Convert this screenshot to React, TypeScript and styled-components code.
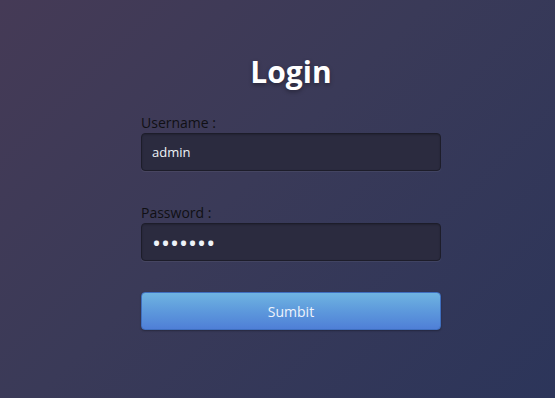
import React from "react";
import styled, { createGlobalStyle } from "styled-components";

const GlobalStyle = createGlobalStyle`
    html, body {
        margin: 0;
        padding: 0;
        height: 100%;
    }

    body {
        font-family: "Open Sans", "Liberation Sans", sans-serif;
        background: linear-gradient(135deg, #453a56 0%, #3a3a58 45%, #2c355a 100%);
        background-attachment: fixed;
    }

    #root {
        min-height: 100%;
    }
`;

const PageDiv = styled.div`
    width: 555px;
    height: 398px;
    box-sizing: border-box;
    padding: 51px 0 0 141px;
`;

const FormDiv = styled.form`
    width: 300px;
    display: flex;
    flex-direction: column;
`;

const Title = styled.h1`
    margin: 0 0 21px;
    text-align: center;
    font-size: 30px;
    line-height: 42px;
    font-weight: 700;
    color: #fff;
    text-shadow: 0 2px 4px rgba(0, 0, 0, 0.35);
`;

const Field = styled.div<{ $gap: number }>`
    display: flex;
    flex-direction: column;
    margin-bottom: ${(p) => p.$gap}px;
`;

const Label = styled.label`
    font-size: 14px;
    line-height: 18px;
    color: #101014;
    margin-bottom: 1px;
`;

const Input = styled.input<{ $dots?: boolean }>`
    box-sizing: border-box;
    width: 300px;
    height: 38px;
    padding: 0 10px;
    border: 1px solid #1d1d2a;
    border-radius: 4px;
    background: #2b2b3f;
    box-shadow: inset 0 1px 2px rgba(0, 0, 0, 0.2), 0 1px 0 rgba(255, 255, 255, 0.06);
    color: #eef3f8;
    font-family: "Open Sans", "Liberation Sans", sans-serif;
    font-size: ${(p) => (p.$dots ? "24px" : "13px")};
    letter-spacing: 0;
    outline: none;
`;

const SubmitButton = styled.button`
    box-sizing: border-box;
    width: 300px;
    height: 38px;
    border: 1px solid #3f6fbf;
    border-radius: 4px;
    background: linear-gradient(to bottom, #6fb4e1 0%, #5d99dc 50%, #4f7fd7 100%);
    color: #eef3fb;
    font-family: "Open Sans", "Liberation Sans", sans-serif;
    font-size: 14px;
    cursor: pointer;
    box-shadow: 0 1px 2px rgba(0, 0, 0, 0.3);
`;

export default function App(): JSX.Element {
    return (
        <>
            <GlobalStyle />
            <PageDiv>
                <FormDiv onSubmit={(e) => e.preventDefault()}>
                    <Title>Login</Title>
                    <Field $gap={33}>
                        <Label htmlFor="username">Username :</Label>
                        <Input id="username" type="text" defaultValue="admin" />
                    </Field>
                    <Field $gap={31}>
                        <Label htmlFor="password">Password :</Label>
                        <Input id="password" type="password" defaultValue="1234567" $dots />
                    </Field>
                    <SubmitButton type="submit">Sumbit</SubmitButton>
                </FormDiv>
            </PageDiv>
        </>
    );
}
